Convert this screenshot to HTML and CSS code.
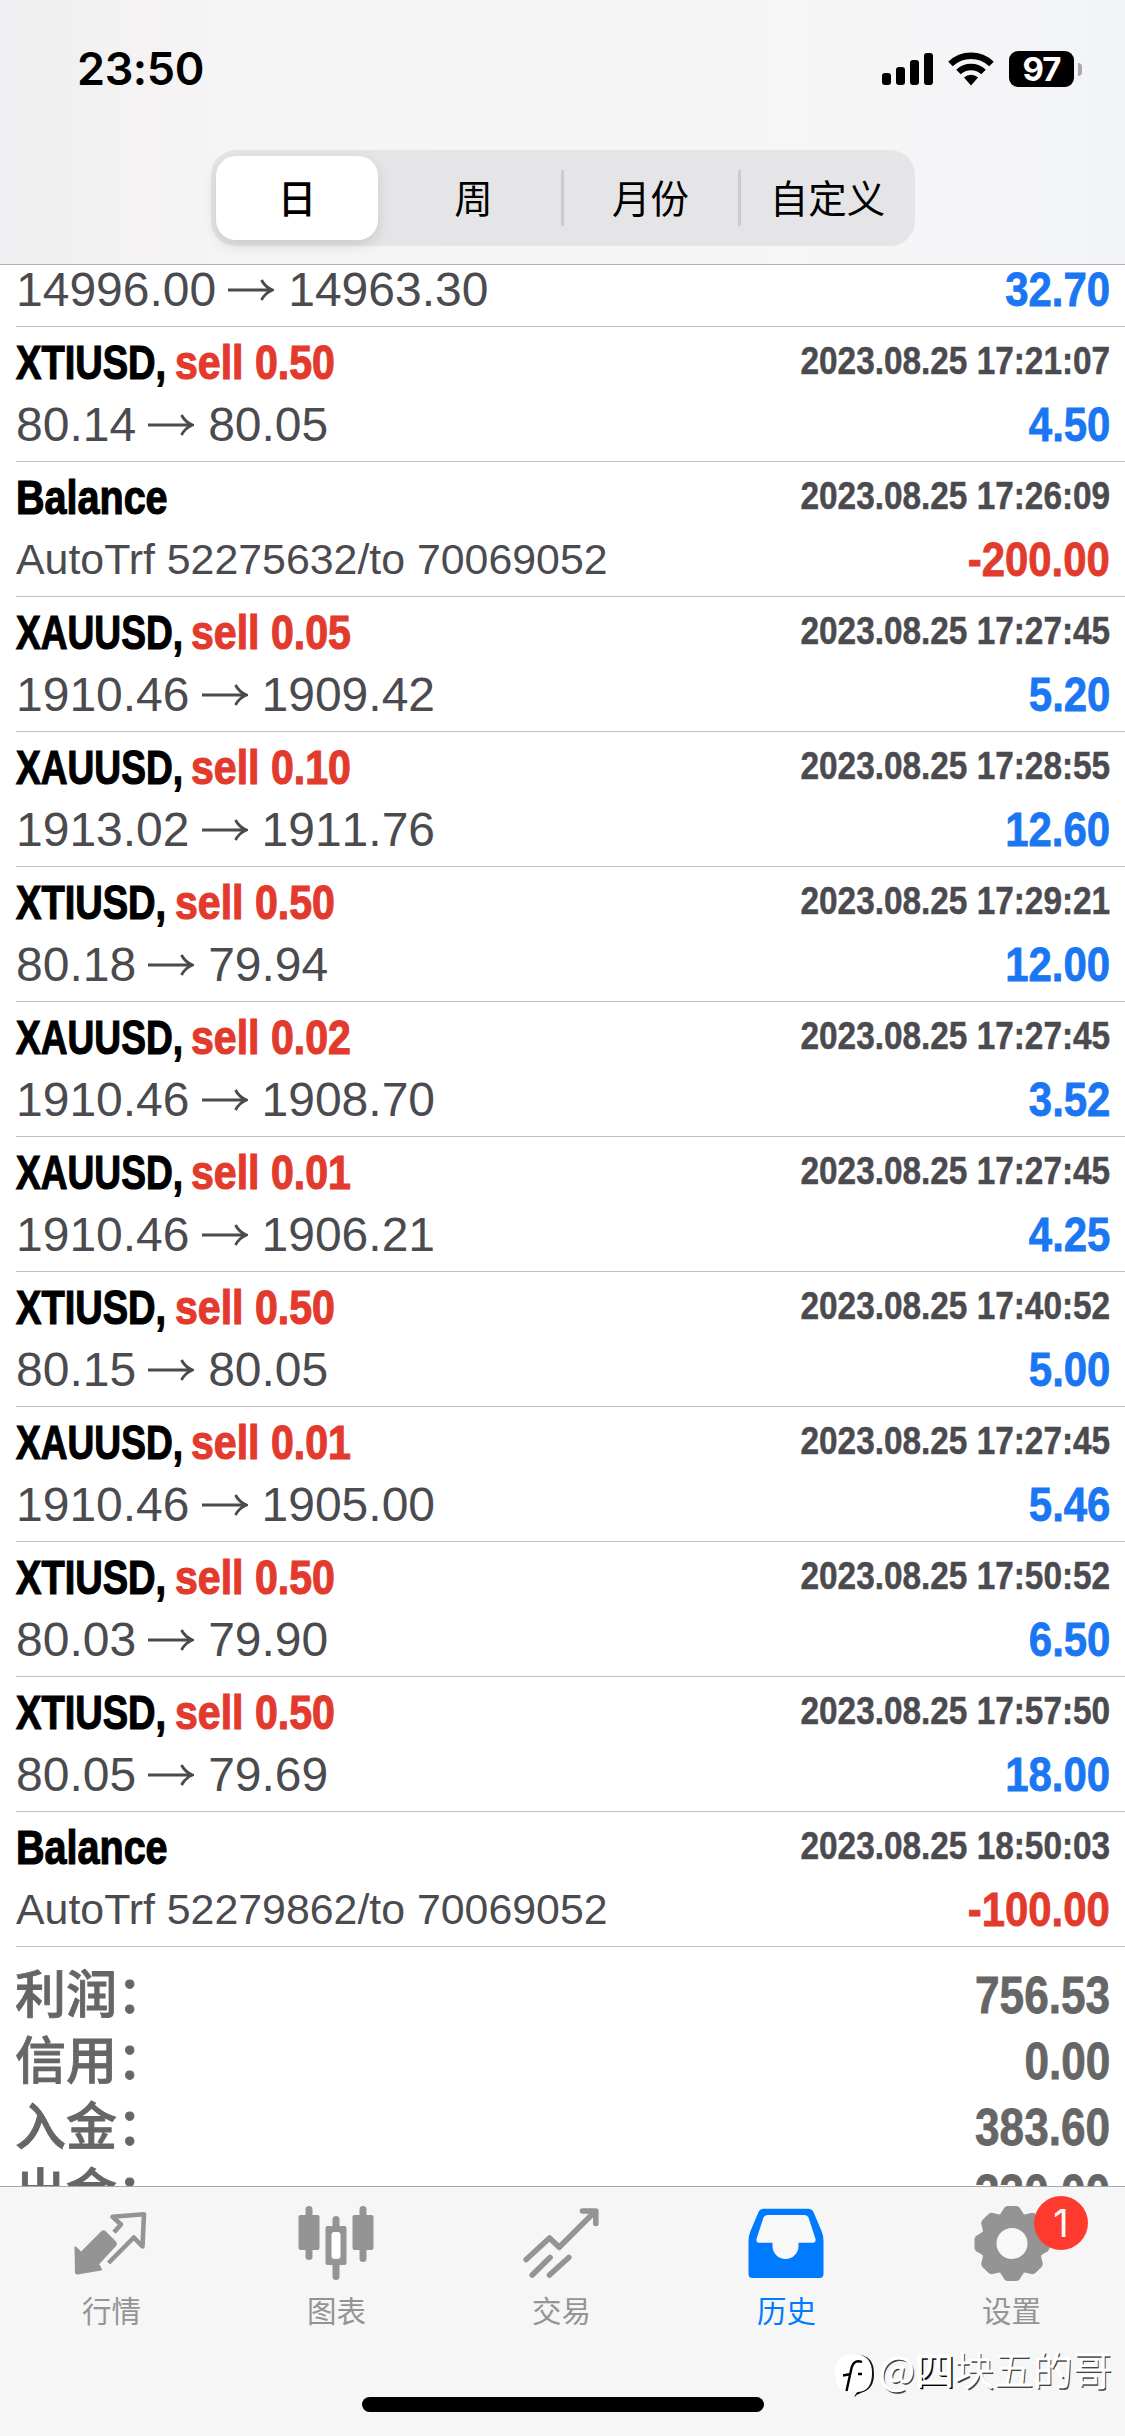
FILE: index.html
```html
<!DOCTYPE html>
<html lang="zh-CN">
<head>
<meta charset="utf-8">
<title>历史</title>
<link rel="stylesheet" href="styles.css">
</head>
<body>
<svg class="defs" width="0" height="0" aria-hidden="true">
  <symbol id="arrow" viewBox="0 0 46 24"><path d="M0 12H44M33.500 2Q37 9 44.500 12Q37 15 33.500 22" fill="none" stroke="currentColor" stroke-width="2.800"/></symbol>
</svg>
<div class="screen">
  <header class="header">
    <div class="status">
      <span class="time">23:50</span>
      <div class="indicators">
        <svg class="signal" width="52" height="34" viewBox="0 0 52 34"><rect x="0" y="21" width="9" height="12" rx="3"/><rect x="14" y="15" width="9" height="18" rx="3"/><rect x="28" y="8" width="9" height="25" rx="3"/><rect x="42" y="1" width="9" height="32" rx="3"/></svg>
        <svg class="wifi" width="46" height="34" viewBox="0 0 46 34"><g fill="none" stroke="#000" stroke-width="6.500"><path d="M2.500 12A29.500 29.500 0 0 1 43.500 12"/><path d="M10.500 20A18 18 0 0 1 35.500 20"/></g><path d="M16 25.500A10 10 0 0 1 30 25.500L23 33.500Z"/></svg>
        <span class="battery">97</span><span class="nub"></span>
      </div>
    </div>
    <nav class="segments">
      <span class="segment active">日</span>
      <span class="segment">周</span>
      <span class="segment ruled">月份</span>
      <span class="segment ruled">自定义</span>
    </nav>
  </header>

  <main class="history">
    <section class="deal clipped">
      <div class="line"><span class="prices">14996.00<svg class="to"><use href="#arrow"/></svg>14963.30</span><span class="value gain">32.70</span></div>
    </section>
    <section class="deal">
      <div class="head"><h2 class="title"><span class="symbol xti">XTIUSD,</span><span class="side">sell 0.50</span></h2><time class="date">2023.08.25 17:21:07</time></div>
      <div class="line"><span class="prices">80.14<svg class="to"><use href="#arrow"/></svg>80.05</span><span class="value gain">4.50</span></div>
    </section>
    <section class="deal">
      <div class="head"><h2 class="title"><span class="symbol balance">Balance</span></h2><time class="date">2023.08.25 17:26:09</time></div>
      <div class="line"><span class="note">AutoTrf 52275632/to 70069052</span><span class="value loss">-200.00</span></div>
    </section>
    <section class="deal">
      <div class="head"><h2 class="title"><span class="symbol xau">XAUUSD,</span><span class="side">sell 0.05</span></h2><time class="date">2023.08.25 17:27:45</time></div>
      <div class="line"><span class="prices">1910.46<svg class="to"><use href="#arrow"/></svg>1909.42</span><span class="value gain">5.20</span></div>
    </section>
    <section class="deal">
      <div class="head"><h2 class="title"><span class="symbol xau">XAUUSD,</span><span class="side">sell 0.10</span></h2><time class="date">2023.08.25 17:28:55</time></div>
      <div class="line"><span class="prices">1913.02<svg class="to"><use href="#arrow"/></svg>1911.76</span><span class="value gain">12.60</span></div>
    </section>
    <section class="deal">
      <div class="head"><h2 class="title"><span class="symbol xti">XTIUSD,</span><span class="side">sell 0.50</span></h2><time class="date">2023.08.25 17:29:21</time></div>
      <div class="line"><span class="prices">80.18<svg class="to"><use href="#arrow"/></svg>79.94</span><span class="value gain">12.00</span></div>
    </section>
    <section class="deal">
      <div class="head"><h2 class="title"><span class="symbol xau">XAUUSD,</span><span class="side">sell 0.02</span></h2><time class="date">2023.08.25 17:27:45</time></div>
      <div class="line"><span class="prices">1910.46<svg class="to"><use href="#arrow"/></svg>1908.70</span><span class="value gain">3.52</span></div>
    </section>
    <section class="deal">
      <div class="head"><h2 class="title"><span class="symbol xau">XAUUSD,</span><span class="side">sell 0.01</span></h2><time class="date">2023.08.25 17:27:45</time></div>
      <div class="line"><span class="prices">1910.46<svg class="to"><use href="#arrow"/></svg>1906.21</span><span class="value gain">4.25</span></div>
    </section>
    <section class="deal">
      <div class="head"><h2 class="title"><span class="symbol xti">XTIUSD,</span><span class="side">sell 0.50</span></h2><time class="date">2023.08.25 17:40:52</time></div>
      <div class="line"><span class="prices">80.15<svg class="to"><use href="#arrow"/></svg>80.05</span><span class="value gain">5.00</span></div>
    </section>
    <section class="deal">
      <div class="head"><h2 class="title"><span class="symbol xau">XAUUSD,</span><span class="side">sell 0.01</span></h2><time class="date">2023.08.25 17:27:45</time></div>
      <div class="line"><span class="prices">1910.46<svg class="to"><use href="#arrow"/></svg>1905.00</span><span class="value gain">5.46</span></div>
    </section>
    <section class="deal">
      <div class="head"><h2 class="title"><span class="symbol xti">XTIUSD,</span><span class="side">sell 0.50</span></h2><time class="date">2023.08.25 17:50:52</time></div>
      <div class="line"><span class="prices">80.03<svg class="to"><use href="#arrow"/></svg>79.90</span><span class="value gain">6.50</span></div>
    </section>
    <section class="deal">
      <div class="head"><h2 class="title"><span class="symbol xti">XTIUSD,</span><span class="side">sell 0.50</span></h2><time class="date">2023.08.25 17:57:50</time></div>
      <div class="line"><span class="prices">80.05<svg class="to"><use href="#arrow"/></svg>79.69</span><span class="value gain">18.00</span></div>
    </section>
    <section class="deal">
      <div class="head"><h2 class="title"><span class="symbol balance">Balance</span></h2><time class="date">2023.08.25 18:50:03</time></div>
      <div class="line"><span class="note">AutoTrf 52279862/to 70069052</span><span class="value loss">-100.00</span></div>
    </section>
    <dl class="summary">
      <div class="total"><dt>利润：</dt><dd>756.53</dd></div>
      <div class="total"><dt>信用：</dt><dd>0.00</dd></div>
      <div class="total"><dt>入金：</dt><dd>383.60</dd></div>
      <div class="total"><dt>出金：</dt><dd>330.00</dd></div>
    </dl>
  </main>

  <footer class="tabbar">
    <nav class="tabs">
      <a class="tab">
        <svg width="90" height="90" viewBox="67.500 2200 90 90"><path d="M114.500 2232.300L121.500 2224.500L113 2216.800L144.500 2214.200L143 2246.500L134.300 2237.500L109 2263" fill="none" stroke="currentColor" stroke-width="4.600" stroke-linejoin="round"/><path d="M76 2247.500L81.500 2253L102.500 2232Q104 2230.500 105.500 2232L116 2242.500Q117 2243.500 116 2245L98.500 2264L101.500 2269.500L78 2273.500L76.500 2273Z" fill="currentColor" stroke="currentColor" stroke-width="2" stroke-linejoin="round"/></svg>
        <span>行情</span>
      </a>
      <a class="tab">
        <svg width="90" height="90" viewBox="292.500 2200 90 90" fill="currentColor"><rect x="299" y="2215" width="21" height="35" rx="2"/><rect x="306" y="2206" width="7" height="54" rx="3.500"/><rect x="353" y="2215" width="21" height="35" rx="2"/><rect x="360" y="2206" width="7" height="56" rx="3.500"/><rect x="333" y="2216" width="7" height="64" rx="3.500"/><rect x="326" y="2226" width="21" height="39" rx="2"/><rect x="332" y="2232" width="9" height="27" rx="3" fill="#fff"/></svg>
        <span>图表</span>
      </a>
      <a class="tab">
        <svg width="90" height="90" viewBox="517.500 2200 90 90" fill="none" stroke="currentColor" stroke-width="5.600" stroke-linecap="round" stroke-linejoin="round"><path d="M526.700 2259.500L550 2238L559.700 2247.300L595 2212M583 2211H596.300V2223.500M532.700 2275L550.500 2257.500M550 2275L569.300 2257.500"/></svg>
        <span>交易</span>
      </a>
      <a class="tab current">
        <svg width="90" height="90" viewBox="742.500 2200 90 90"><path d="M764 2208.700H809Q812 2208.700 814 2212L822 2231Q824 2235.500 824 2241V2274Q824 2278 820 2278H753Q749 2278 749 2274V2241Q749 2235.500 751 2231L759 2212Q761 2208.700 764 2208.700Z" fill="currentColor"/><path d="M768 2215H805Q808 2215 809 2217.500L816 2239Q816.500 2242.700 813.500 2242.700H799V2246A13 13 0 0 1 773 2246V2242.700H759.500Q756.500 2242.700 757 2239L764 2217.500Q765 2215 768 2215Z" fill="#f8f8f8"/></svg>
        <span>历史</span>
      </a>
      <a class="tab">
        <svg width="90" height="90" viewBox="-45 -43.500 90 90" fill="currentColor"><circle r="30"/><path id="t" d="M-14-26L-9-33.500Q-7.500-37.500-4-37.500H4Q7.500-37.500 9-33.500L14-26Z"/><use href="#t" transform="rotate(45)"/><use href="#t" transform="rotate(90)"/><use href="#t" transform="rotate(135)"/><use href="#t" transform="rotate(180)"/><use href="#t" transform="rotate(225)"/><use href="#t" transform="rotate(270)"/><use href="#t" transform="rotate(315)"/><circle r="15.500" fill="#f8f8f8"/></svg>
        <span>设置</span>
        <b class="badge">1</b>
      </a>
    </nav>
    <div class="home"></div>
    <div class="watermark">
      <svg width="42" height="48" viewBox="833 2350 42 48"><path d="M853 2355Q874 2353 874 2374Q874 2389 862 2392.500Q857 2394 854.500 2397.500Q855 2393 859 2391Q868 2386 869 2375Z" fill="#111"/><path d="M853 2354Q872 2354 872 2373Q872 2391 858 2392H850Q835 2392 835 2374Q835 2354 853 2354Z" fill="#fff"/><path d="M862 2362Q854 2359 851.500 2368L846.500 2391M843 2375.500L851 2374M858 2374H862" fill="none" stroke="#000" stroke-width="2.400"/></svg>
      <span class="handle">@<b class="strong">四</b>块五的哥</span>
    </div>
  </footer>
</div>
</body>
</html>
```
FILE: styles.css
```css
* { box-sizing: border-box; }
body { margin: 0; background: #fff; }
.defs { position: absolute; }
.screen {
  width: 1125px;
  height: 2436px;
  display: flex;
  flex-direction: column;
  overflow: hidden;
  background: #fff;
  color: #4b4b4f;
  font-family: "Liberation Sans", "Noto Sans CJK SC", sans-serif;
  font-kerning: none;
}

/* Header */
.header {
  flex: none;
  height: 265px;
  border-bottom: 1px solid #b2b2b2;
  background: linear-gradient(90deg, #eeeff0 0, #f4f2f3 130px, #f6f5f5 260px, #f6f6f6 800px, #f3f4f8 1125px);
}
.status {
  height: 150px;
  padding: 42px 43px 0 77px;
  display: flex;
  justify-content: space-between;
  align-items: flex-start;
}
.time {
  font: 600 45px/54px Inter, sans-serif;
  letter-spacing: -0.4px;
  color: #000;
}
.indicators { display: flex; align-items: center; padding-top: 9px; height: 45px; }
.wifi { margin: 0 15px 0 14px; }
.battery {
  width: 65px;
  height: 36px;
  border-radius: 9px;
  background: #000;
  color: #fff;
  text-align: center;
  font: 700 33px/36px Inter, sans-serif;
  letter-spacing: -1px;
}
.nub { width: 4px; height: 13px; margin-left: 4px; border-radius: 0 4px 4px 0; background: #aaa; }
.segments {
  width: 704px;
  height: 96px;
  margin-left: 211px;
  padding: 6px 0 6px 5px;
  display: flex;
  border-radius: 25px;
  background: #e5e5e7;
  color: #000;
  font: 400 38.5px/81px "Noto Sans CJK SC", sans-serif;
}
.segment { flex: 0 0 177px; text-align: center; padding-left: 2px; }
.segment.active {
  flex-basis: 162px;
  margin-right: 6px;
  padding: 0;
  border-radius: 20px;
  background: #fff;
  box-shadow: 0 5px 14px rgba(0, 0, 0, .12);
  font-weight: 500;
}
.ruled {
  background: linear-gradient(#ccccce, #ccccce) 0 14px / 3px 56px no-repeat;
}

/* Deals */
.history { flex: 1; min-height: 0; overflow: hidden; }
.deal { height: 135px; margin-left: 16px; padding-right: 15px; border-bottom: 1px solid #c2c2c4; }
.clipped { height: 62px; overflow: hidden; }
.clipped .line { margin-top: -5px; }
.head, .line { display: flex; justify-content: space-between; align-items: flex-start; }
.head { height: 68px; }
.title { margin: 0; display: flex; font-size: 48.5px; line-height: 70px; font-weight: 700; }
.symbol, .side {
  display: block;
  transform-origin: left;
  white-space: nowrap;
  -webkit-text-stroke: 1.2px currentColor;
}
.symbol { color: #000; }
.xti { width: 159px; transform: scaleX(.785); }
.xau { width: 175px; transform: scaleX(.765); }
.balance { transform: scaleX(.815); }
.side { color: #e23b2e; transform: scaleX(.847); }
.date {
  font-size: 39px;
  line-height: 68px;
  font-weight: 700;
  transform: scaleX(.855);
  transform-origin: right;
  -webkit-text-stroke: .5px currentColor;
}
.prices { display: flex; align-items: center; font-size: 48px; line-height: 59px; }
.clipped .prices { padding-left: 0; }
.to { width: 46px; height: 24px; margin: 0 14px 0 12px; }
.note { font-size: 42.85px; line-height: 58px; font-kerning: normal; }
.value {
  font-size: 48px;
  line-height: 59px;
  font-weight: 700;
  transform: scaleX(.873);
  transform-origin: right;
  -webkit-text-stroke: .8px currentColor;
}
.gain { color: #1a76f2; }
.loss { color: #e23b2e; }

/* Totals */
.summary { margin: 0; padding: 11px 15px 0 15px; color: #666; }
.total { display: flex; justify-content: space-between; height: 66px; line-height: 66px; font-size: 51px; }
.total dt {
  font-family: "Noto Sans CJK SC", sans-serif;
  font-weight: 500;
  -webkit-text-stroke: .8px currentColor;
}
.total dd {
  margin: 0;
  padding-top: 5px;
  font-weight: 700;
  transform: scaleX(.865);
  transform-origin: right;
  -webkit-text-stroke: .8px currentColor;
}

/* Tab bar */
.tabbar {
  position: relative;
  flex: none;
  height: 250px;
  border-top: 1px solid #a8a8a8;
  background: #f6f6f6;
}
.tabs { display: flex; height: 210px; padding-top: 13px; }
.tab {
  position: relative;
  width: 225px;
  padding-right: 2px;
  display: flex;
  flex-direction: column;
  align-items: center;
  color: #949494;
  font: 400 29.5px/39px "Noto Sans CJK SC", sans-serif;
}
.current { color: #007aff; }
.badge {
  position: absolute;
  left: 134px;
  top: -4px;
  width: 54px;
  height: 54px;
  border-radius: 50%;
  background: #ff3b30;
  color: #fff;
  text-align: center;
  font: 400 38px/54px Inter, sans-serif;
}
.home { width: 402px; height: 15px; margin: 0 auto; border-radius: 8px; background: #000; }
.watermark {
  position: absolute;
  left: 833px;
  top: 163px;
  display: flex;
  align-items: flex-start;
  gap: 4px;
}
.handle {
  margin-top: -4px;
  color: #fff;
  font: 300 39.4px/44px "Noto Sans CJK SC", sans-serif;
  -webkit-text-stroke: 1px #fff;
  text-shadow: 1.5px 1.5px 0 #444;
}
.strong { font-weight: 400; text-shadow: 2px 1.5px 0 #000; }
```
